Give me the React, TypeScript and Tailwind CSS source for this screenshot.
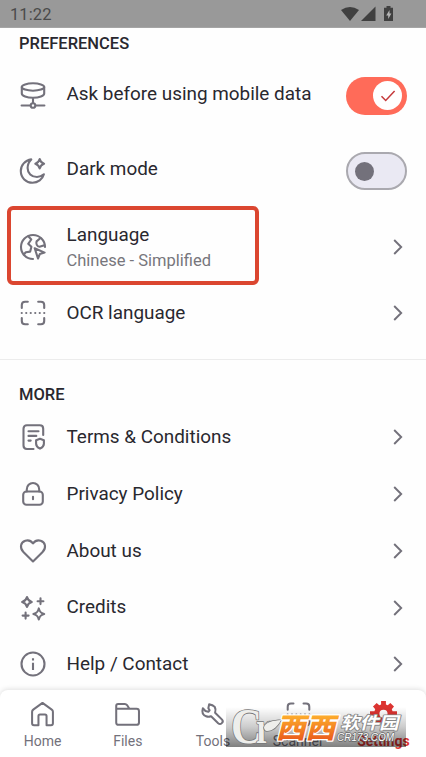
import type { ReactNode } from "react"

function Icon({ children }: { children: ReactNode }) {
    return (
        <svg
            viewBox="0 0 28 28"
            fill="none"
            stroke="currentColor"
            strokeWidth="2.1"
            strokeLinecap="round"
            strokeLinejoin="round"
            className="size-7 shrink-0"
        >
            {children}
        </svg>
    )
}

const DataIcon = () => (
    <Icon>
        <ellipse cx="14" cy="5" rx="11.2" ry="3.7" />
        <path d="M2.8 5v6.6c0 2.300 5 4.200 11.200 4.200s11.200-1.900 11.200-4.200V5M14 15.800v5.400M2.600 23.500h8.600M16.800 23.500h8.600" />
        <circle cx="14" cy="23.500" r="2.300" />
    </Icon>
)

const MoonIcon = () => (
    <Icon>
        <path d="M12.3 2.400C6 3.200 1.800 8.300 1.800 14c0 6.700 5.300 11.800 11.700 11.800 5.400 0 10-3.400 11.400-8.500-2 1.800-4.300 2.700-6.900 2.700C12.500 20 8.600 16.200 8.600 10.900c0-3.300 1.300-6.200 3.700-8.500Z" />
        <path d="M20.700 2c.7 3 1.400 3.800 4.400 4.700-3 .9-3.700 1.700-4.400 4.700-.8-3-1.500-3.800-4.400-4.700 2.900-.9 3.600-1.700 4.400-4.700Z" />
    </Icon>
)

const GlobeIcon = () => (
    <Icon>
        <path d="M14 26A12 12 0 1 1 26 14" />
        <path d="M9.300 3.200 12.300 6.500 9.200 10.800l3.200 3-1.200 4.800-4.400.6-2 2.300" />
        <path d="M21.500 5 17.600 8.400c-.9 2.500.4 5 2.900 5.300l4.900-1.500" />
        <path d="m15.700 15.200 9.900 4.400-4.700 1.300-1.900 4.600Z" />
    </Icon>
)

const ScanIcon = () => (
    <Icon>
        <path d="M2.800 9V6c0-2.100 1.200-3.300 3.300-3.300h2.700M19.200 2.700h2.700c2.100 0 3.300 1.200 3.300 3.300v3M2.800 19v3c0 2.100 1.200 3.300 3.300 3.300h2.700M19.200 25.300h2.700c2.100 0 3.300-1.200 3.300-3.300v-3" />
        <path d="M2.700 14h23" strokeDasharray="0.1 4.4" />
    </Icon>
)

const TermsIcon = () => (
    <Icon>
        <path d="M24.200 12V5.700c0-2.200-1.200-3.400-3.400-3.400H7.900c-2.200 0-3.400 1.200-3.400 3.400v16.900c0 2.200 1.200 3.400 3.400 3.400h6.600M9.500 8.200h10M9.500 12.900h7.800M9.500 17.600h2.200" />
        <path d="m21 15.800 3.900 1.400v3.500c0 2.300-1.400 3.700-3.900 4.900-2.500-1.200-3.900-2.600-3.900-4.900v-3.500Z" />
    </Icon>
)

const LockIcon = () => (
    <Icon>
        <rect x="4.200" y="11.500" width="19.600" height="13.200" rx="3.300" />
        <path d="M7.800 11.500V9.200a6.200 6.200 0 0 1 12.400 0v2.300M14 16.800v2.500" />
    </Icon>
)

const HeartIcon = () => (
    <Icon>
        <path d="M14 24.500 4.400 15C.4 11 1.500 5.200 6.300 3.700c3-.9 6 .4 7.700 2.700 1.700-2.300 4.700-3.600 7.700-2.700 4.800 1.500 5.900 7.300 1.900 11.300Z" />
    </Icon>
)

const SparkleIcon = () => (
    <Icon>
        <path d="M8 3c.8 3.200 1.700 4.100 4.800 5-3.100.9-4 1.800-4.800 5-.8-3.200-1.700-4.100-4.900-5C6.300 7.100 7.200 6.200 8 3ZM19.800 14.400c.9 3.500 1.900 4.600 5.400 5.500-3.500.9-4.500 2-5.400 5.500-.9-3.500-1.900-4.600-5.400-5.500 3.500-.9 4.500-2 5.400-5.500ZM21.500 4.300v5.800M18.600 7.200h5.800M6.600 18.600v6M3.600 21.600h6" />
    </Icon>
)

const InfoIcon = () => (
    <Icon>
        <circle cx="14" cy="14" r="11.500" />
        <path d="M14 13.700v5.200M14 9.200v.2" strokeLinecap="square" />
    </Icon>
)

function Chevron() {
    return (
        <svg viewBox="0 0 10 16" fill="none" stroke="currentColor" strokeWidth="1.9" className="w-2.5 h-4">
            <path d="m1.200 1 7 7-7 7" />
        </svg>
    )
}

function StatusBar() {
    return (
        <div className="flex h-7 shrink-0 items-center justify-between border-b border-[#a5a5a5] bg-[#999] pl-[10px] pr-8 text-[#404040]">
            <span className="pt-[3px] text-[16.5px] tracking-[0.1px] text-[#4a4a4a]">11:22</span>
            <svg viewBox="0 0 54 17" fill="currentColor" className="h-[17px] w-[54px]">
                <path d="M1 5Q10 -1 19 5L10 16Z" />
                <path d="M35.500 1.500V16H21Z" />
                <path d="M46.500 1h4v1.700H53V16h-9V2.700h2.500Z" />
                <path d="m49.500 5-3.300 5.500h2V14l3.200-5.500h-1.900Z" fill="#b5b5b5" />
            </svg>
        </div>
    )
}

function Switch({ on }: { on?: boolean }) {
    if (on) {
        return (
            <div className="flex h-[38px] w-[61px] items-center justify-end rounded-full bg-[#ff6b59] pr-[5px]">
                <div className="flex size-[29px] items-center justify-center rounded-full bg-white">
                    <svg viewBox="0 0 16 12" fill="none" stroke="#c5393b" strokeWidth="1.5" className="h-3 w-4">
                        <path d="m1.500 6.300 4.200 4.200 8.900-9.500" />
                    </svg>
                </div>
            </div>
        )
    }
    return (
        <div className="flex h-[38px] w-[61px] items-center rounded-full border-2 border-[#aaa9af] bg-[#eae9f3] pl-[7px]">
            <div className="size-[19px] rounded-full bg-[#73717b]" />
        </div>
    )
}

function Row({ icon, label, className }: { icon: ReactNode; label: string; className: string }) {
    return (
        <div className={`flex shrink-0 items-center pl-[19px] pr-[23px] ${className}`}>
            {icon}
            <span className="ml-[19.5px] flex-1 text-[18.9px] text-[#29282f]">{label}</span>
            <Chevron />
        </div>
    )
}

const more = [
    { label: "Terms & Conditions", icon: <TermsIcon /> },
    { label: "Privacy Policy", icon: <LockIcon /> },
    { label: "About us", icon: <HeartIcon /> },
    { label: "Credits", icon: <SparkleIcon /> },
    { label: "Help / Contact", icon: <InfoIcon /> },
]

const tabs = [
    {
        label: "Home",
        icon: (
            <Icon>
                <path d="M3.200 11.200c0-1 .4-1.700 1.200-2.300L14 2l9.600 6.900c.8.600 1.200 1.300 1.200 2.300v12c0 1.200-.8 2-2 2h-4.600v-9.500c0-1-.6-1.600-1.600-1.600h-5.200c-1 0-1.600.6-1.600 1.600v9.500H5.200c-1.200 0-2-.8-2-2Z" />
            </Icon>
        ),
    },
    {
        label: "Files",
        icon: (
            <Icon>
                <path d="M2.300 8.800V5c0-1.200.8-2 2-2h7c1 0 1.600.4 2.200 1.200l2.500 3.800h7.400c1.600 0 2.500.9 2.500 2.500v11.700c0 1.600-.9 2.500-2.500 2.500H4.800c-1.600 0-2.500-.9-2.500-2.500ZM2.300 8H16" />
            </Icon>
        ),
    },
    {
        label: "Tools",
        icon: (
            <Icon>
                <path d="m10.500 3.500-.8 4 1.300 2.200-1.300 1.500-3-.9L4 7.600c-1.200 3.900.3 7 3.400 8.200 1.800.7 3.400.6 5.100 0l7.400 7.200c2.500 2.300 6.200-1.200 4-3.700l-7.200-7.200c.8-2.400.6-4.300-.4-6-1.200-1.400-3.300-2.400-5.800-2.600Z" />
            </Icon>
        ),
    },
    { label: "Scanner", icon: <ScanIcon /> },
    {
        label: "Settings",
        active: true,
        icon: (
            <svg viewBox="0 0 28 28" fill="currentColor" fillRule="evenodd" className="size-7">
                <path d="M11.500 0h5v3.600l1.900.8 2.700-2.300 3.800 3.700-2.300 2.800.8 1.900H28v5.200h-4.600l-.8 1.900 2.300 2.800-3.800 3.700-2.700-2.300-1.900.8V27h-5v-4.400l-1.900-.8-2.700 2.300-3.800-3.700 2.300-2.800-.8-1.900H0v-5.200h4.600l.8-1.900-2.300-2.800 3.800-3.700 2.700 2.300 1.900-.8ZM14 9a4.200 4.200 0 1 0 0 8.400A4.200 4.200 0 0 0 14 9Z" />
            </svg>
        ),
    },
]

// translucent site badge lying over the right half of the tab bar
function Watermark() {
    return (
        <svg viewBox="0 0 180 40" className="absolute left-[226px] top-[17px] h-10 w-[180px] overflow-visible">
            <defs>
                <linearGradient id="shade" x1="0" y1="0" x2="0" y2="1">
                    <stop offset="0" stopColor="#000" stopOpacity="0" />
                    <stop offset="0.5" stopColor="#000" stopOpacity="0.2" />
                    <stop offset="1" stopColor="#000" stopOpacity="0.5" />
                </linearGradient>
                <linearGradient id="orange" x1="0" y1="0" x2="0" y2="1">
                    <stop offset="0.2" stopColor="#ffb52e" />
                    <stop offset="0.9" stopColor="#e9581b" />
                </linearGradient>
            </defs>
            <rect width="180" height="40" fill="url(#shade)" />
            <g fill="#eeeeeb" stroke="#777" strokeWidth="1.6" strokeLinejoin="round" paintOrder="stroke">
                <text x="5" y="36" fontFamily="Liberation Serif, serif" fontSize="50" fontWeight="700" textLength="31" lengthAdjust="spacingAndGlyphs">C</text>
                <text x="30" y="36" fontFamily="Liberation Serif, serif" fontSize="46" fontWeight="700" textLength="15" lengthAdjust="spacingAndGlyphs">r</text>
                <path d="M38 20c3-6 9-6 17-7-3 6-8 11-14 11-2 0-3-2-3-4Z" />
            </g>
            <g transform="skewX(-14)" fontFamily="Noto Sans CJK SC, sans-serif" strokeLinejoin="round" paintOrder="stroke">
                <text x="57.500" y="30.500" fontSize="28" fontWeight="900" textLength="59" lengthAdjust="spacingAndGlyphs" fill="url(#orange)" stroke="#fff" strokeWidth="2.500">西西</text>
                <text x="120" y="22" fontSize="17" fontWeight="700" textLength="58" lengthAdjust="spacingAndGlyphs" fill="#fff" stroke="#888" strokeWidth="1.800">软件园</text>
            </g>
            <text x="111" y="34" fontFamily="Liberation Sans, sans-serif" fontSize="10.500" fontStyle="italic" textLength="57" lengthAdjust="spacingAndGlyphs" fill="#fff" stroke="#666" strokeWidth="1.400" strokeLinejoin="round" paintOrder="stroke">CR173.COM</text>
        </svg>
    )
}

function BottomNav() {
    return (
        <nav className="relative grid h-[67px] shrink-0 grid-cols-5 rounded-t-lg bg-white shadow-[0_-1px_5px_rgba(0,0,0,0.12)]">
            {tabs.map((tab) => (
                <div
                    key={tab.label}
                    className={`flex flex-col items-center pt-[11px] ${tab.active ? "text-[#dc3431]" : "text-[#73717b]"}`}
                >
                    <div className="[&>svg]:size-[27px]">{tab.icon}</div>
                    <span className={`mt-[3px] text-[14px] leading-5 ${tab.active ? "font-bold" : ""}`}>{tab.label}</span>
                </div>
            ))}
            <Watermark />
        </nav>
    )
}

export default function App() {
    return (
        <div className="flex h-[757px] w-[426px] flex-col overflow-hidden bg-[#fefefe] font-[Roboto,sans-serif] text-[#73717b]">
            <StatusBar />

            <h2 className="flex h-[30px] shrink-0 items-center pl-[19px] pt-0.5 text-[16.5px] font-medium text-[#29282f]">
                PREFERENCES
            </h2>

            <div className="flex h-[75px] shrink-0 items-center pl-[19px] pr-[19px]">
                <DataIcon />
                <span className="ml-[19.5px] flex-1 pb-0.5 text-[18.9px] text-[#29282f]">Ask before using mobile data</span>
                <Switch on />
            </div>

            <div className="flex h-[76px] shrink-0 items-center pl-[19px] pr-[19px]">
                <MoonIcon />
                <span className="ml-[19.5px] flex-1 pb-[3px] text-[18.9px] text-[#29282f]">Dark mode</span>
                <Switch />
            </div>

            <div className="relative flex h-[75px] shrink-0 items-center pl-[19px] pr-[23px]">
                <div className="absolute left-[7px] top-[-3px] h-[79px] w-[252px] rounded-md border-4 border-[#db4630]" />
                <GlobeIcon />
                <div className="ml-[19.5px] flex-1 pt-0.5">
                    <p className="text-[18.9px] leading-[26px] text-[#29282f]">Language</p>
                    <p className="text-[16.5px] leading-[25px] text-[#77767c]">Chinese - Simplified</p>
                </div>
                <Chevron />
            </div>

            <Row icon={<ScanIcon />} label="OCR language" className="h-[58px]" />

            <div className="mt-[17px] h-px shrink-0 bg-[#ececec]" />

            <h2 className="mt-5 flex h-[29px] shrink-0 items-center pl-[19px] pt-px text-[16.5px] font-medium text-[#29282f]">
                MORE
            </h2>

            <div className="flex h-[281px] shrink-0 flex-col">
                {more.map((item) => (
                    <Row key={item.label} icon={item.icon} label={item.label} className="h-[56.75px]" />
                ))}
            </div>

            <BottomNav />
        </div>
    )
}
